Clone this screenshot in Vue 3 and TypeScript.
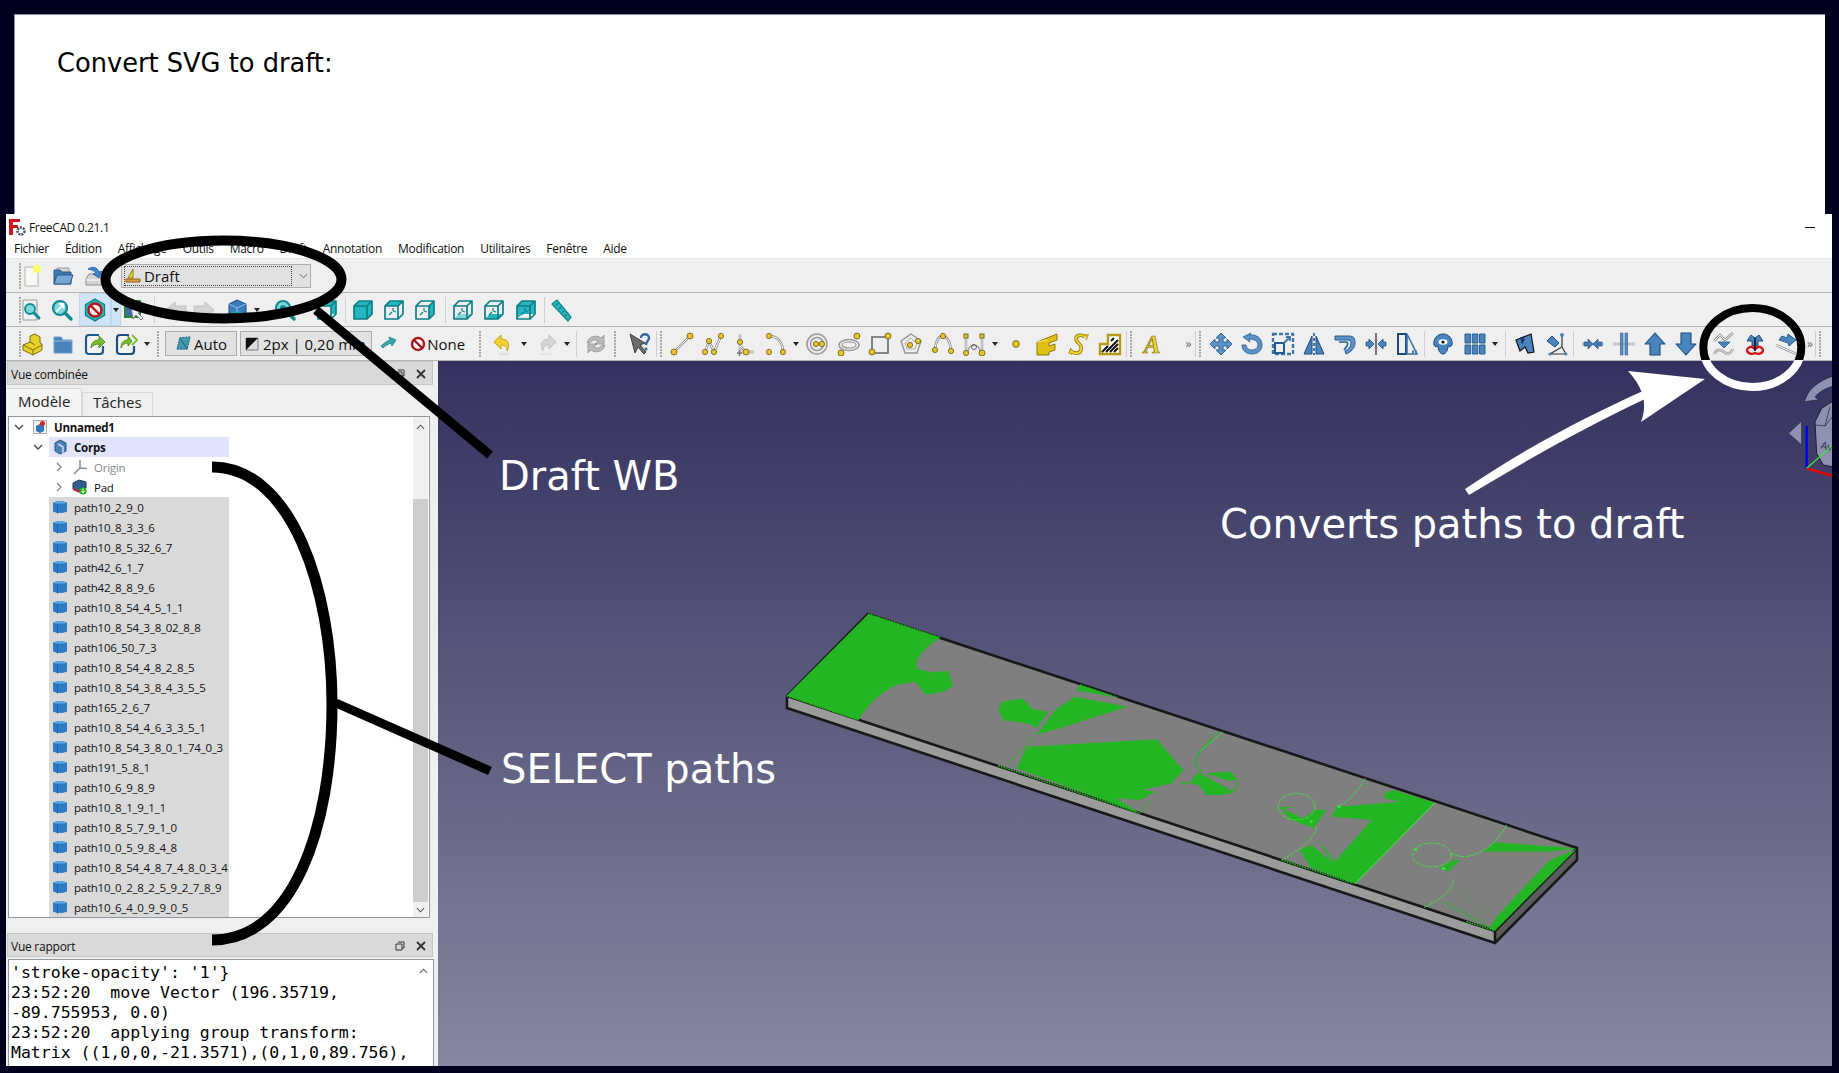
<script setup lang="ts">
type Item = { kind: string; name?: string; w?: number; on?: boolean }

// small svg helpers for the toolbar icons (24x24 box)
const dot = (x: number, y: number, r = 2.6) =>
  `<circle cx="${x}" cy="${y}" r="${r}" fill="#e8c81e" stroke="#6f6226" stroke-width=".9"/>`
const wire = (d: string) =>
  `<path d="${d}" fill="none" stroke="#8b8b8b" stroke-width="2.4"/><path d="${d}" fill="none" stroke="#fff" stroke-width="1"/>`
const blue = (d: string, extra = '') =>
  `<path d="${d}" fill="#4a84bf" stroke="#1e4a78" stroke-width="1.1" stroke-linejoin="round" ${extra}/>`
const cube = (faces: string) =>
  `${faces}<path d="M3 8L8 3H21V16L16 21H3ZM3 8H16V21M16 8L21 3" fill="none" stroke="#0d7f85" stroke-width="1.7" stroke-linejoin="round"/>`
const teal = '#25b6bf'
const mini = `<path d="M7 17l3-3M11 13v-3M11 13l3 1" stroke="#0d7f85" stroke-width="1.2" fill="none"/>`
const lens = `<circle cx="10" cy="10" r="7" fill="#7fd8dc" stroke="#0f8a90" stroke-width="2.2"/><path d="M15 15l6 6" stroke="#0f8a90" stroke-width="3.4" stroke-linecap="round"/>`

const icons: Record<string, string> = {
  new: `<path d="M5 3h13v19H5z" fill="#f8f8f4" stroke="#b4b4b4"/><circle cx="17" cy="5" r="4" fill="#fbfb6a"/>`,
  open: `<path d="M6 4h12v8H6z" fill="#d8d8d8" stroke="#999"/><path d="M3 20V6h6l2 2h9v12z" fill="#3f78b4" stroke="#2a5686"/><path d="M3 20l3-9h16l-3 9z" fill="#76a6d8" stroke="#2a5686"/>`,
  save: `<path d="M3 15l3-5h12l3 5v6H3z" fill="#d4d4d4" stroke="#8a8a8a"/><path d="M3 16h18" stroke="#fff"/><path d="M5 5c5-3 9-2 11 3l3-1-3 7-6-4 3-1c-2-3-5-3-8-4z" fill="#3f86cf" stroke="#245b92" stroke-width=".8"/>`,
  docsearch: `<path d="M4 2h14v20H4z" fill="#f2f2f2" stroke="#9a9a9a"/><circle cx="11" cy="11" r="5" fill="#7fd8dc" stroke="#0f8a90" stroke-width="1.8"/><path d="M15 15l5 5" stroke="#0f8a90" stroke-width="3" stroke-linecap="round"/>`,
  zoom: `${lens}<path d="M6 14l7-7M9 6h4.5v4.5" stroke="#fff" stroke-width="1.8" fill="none"/>`,
  nope: `<path d="M12 1l9.5 5.5v11L12 23l-9.5-5.5v-11z" fill="${teal}" stroke="#0f7f86" stroke-width="1.3"/><circle cx="12" cy="12" r="6.5" fill="#eee" stroke="#b8161c" stroke-width="2.4"/><path d="M7.5 7.5l9 9" stroke="#b8161c" stroke-width="2.4"/>`,
  select: `<path d="M3 3h15v16H3z" fill="#3b6ea8" stroke="#1e8a2c" stroke-width="2"/><path d="M9 9l2 12 3-4 5 5 2-2-5-5 4-2z" fill="#eee" stroke="#666" stroke-width=".8"/>`,
  left: `<path d="M2 12l9-8v4h11v9H11v4z" fill="#d2d2d2" stroke="#c2c2c2"/>`,
  right: `<path d="M22 12l-9-8v4H2v9h11v4z" fill="#d2d2d2" stroke="#c2c2c2"/>`,
  bluebox: `<path d="M4 6l8-4 9 4v13l-9 4-8-4z" fill="#3a7cbc" stroke="#1d4c7c"/><path d="M4 6l8 4 9-4M12 10v13" fill="none" stroke="#8fc1ec"/><path d="M7 14l5 2 2-2 4 2" stroke="#18a8ad" stroke-width="2" fill="none"/>`,
  search: `${lens}<circle cx="10" cy="10" r="3" fill="#0f8a90"/>`,
  vfit: cube(`<path d="M8 3H21V16H16V8H3z" fill="${teal}"/>`),
  vfront: cube(`<path d="M3 8H16V21H3zM3 8L8 3H21V16L16 21V8z" fill="${teal}"/>`),
  vtop: cube(`<path d="M3 8L8 3H21L16 8z" fill="${teal}"/>${mini}`),
  vright: cube(`<path d="M16 8L21 3V16L16 21z" fill="${teal}"/>${mini}`),
  vrear: cube(`<path d="M3 21L8 16H21L16 21z" fill="${teal}" opacity=".5"/>${mini}`),
  vbottom: cube(`<path d="M3 21L8 16H21L16 21z" fill="${teal}"/>${mini}`),
  vleft: cube(`<path d="M3 8L8 3V16L3 21z" fill="${teal}"/><path d="M8 3H21V16H8z" fill="${teal}"/>${mini}`),
  ruler: `<path d="M3 6l5-4 14 17-3 4z" fill="${teal}" stroke="#0f7f86" stroke-width="1.2"/><path d="M7 7l2-1.5M10 11l2-1.5M13 14.5l2-1.5M16 18l2-1.5" stroke="#0b5f64"/>`,
  part: `<path d="M3 13l7-3v-6l5-2 5 3v6l2 1v6l-9 5-10-5z" fill="#e8d02a" stroke="#7b6c12"/><path d="M3 13l10 5 9-5M13 18v5M10 10l5 3" stroke="#7b6c12" fill="none"/>`,
  folder: `<path d="M3 21V5h7l2 3h9v13z" fill="#4a84bf" stroke="#6f9cc8"/><path d="M3 9h18" stroke="#8db5dc"/>`,
  link1: `<path d="M16 3H6a3 3 0 0 0-3 3v13a3 3 0 0 0 3 3h11a3 3 0 0 0 3-3v-5" fill="#f4f4f4" stroke="#1f5a8c" stroke-width="2.2"/><path d="M8 16c0-5 3-8 8-8V4l6 6-6 6v-4c-3 0-6 1-8 4z" fill="#78c12d" stroke="#3f7a12" stroke-width=".8"/>`,
  link2: `<path d="M15 3H6a3 3 0 0 0-3 3v13a3 3 0 0 0 3 3h11a3 3 0 0 0 3-3v-5" fill="#f4f4f4" stroke="#1f4f80" stroke-width="2.2"/><path d="M7 16c0-5 2-8 7-8V4l4 5-4 5v-3c-3 0-5 1-7 5z" fill="#78c12d" stroke="#3f7a12" stroke-width=".8"/><path d="M18 3l5 5-5 5" fill="none" stroke="#78c12d" stroke-width="1.8"/>`,
  snap: `<path d="M5 14c3-3 6-5 9-6l-1-3 7 3-4 6-1-3c-3 1-6 3-8 5z" fill="#3aa5ad" stroke="#1e7d85" stroke-width=".8"/>`,
  undo: `<path d="M10 3L3 10l7 7v-4c4 0 6 2 6 6 3-6 2-12-6-12z" fill="#f5d22a" stroke="#b8940f" stroke-width=".8"/><ellipse cx="13" cy="22" rx="6" ry="1.3" fill="#ddd"/>`,
  redo: `<path d="M14 3l7 7-7 7v-4c-4 0-6 2-6 6-3-6-2-12 6-12z" fill="#d5d5d5" stroke="#bbb" stroke-width=".8"/><ellipse cx="11" cy="22" rx="6" ry="1.3" fill="#e2e2e2"/>`,
  refresh: `<path d="M3 11c1-6 9-9 14-5l3-3v9h-9l3-3c-3-2-6-1-8 2zM21 13c-1 6-9 9-14 5l-3 3v-9h9l-3 3c3 2 6 1 8-2z" fill="#b8b8b8" stroke="#a0a0a0"/>`,
  help: `<path d="M2 2l5 19 3-6 6 7 2-2-6-7 5-2z" fill="#6b6b6b" stroke="#3e3e3e"/><path d="M13 6c0-5 8-5 8 0 0 3-3 3-3 7" fill="none" stroke="#34659b" stroke-width="2.4"/><circle cx="18" cy="17" r="1.5" fill="#34659b"/>`,
  line: `${wire('M4 20L20 4')}${dot(4, 20, 3)}${dot(20, 4, 3)}`,
  wire: `${wire('M4 20L8 9l5 11L20 4')}${dot(4, 20)}${dot(8, 9)}${dot(13, 20)}${dot(20, 4)}`,
  angle: `${wire('M8 2v20M8 14l6 6h8')}${dot(8, 10)}${dot(14, 20, 3)}<path d="M5 21h5M7.5 18v6" stroke="#777" stroke-width="1.5"/>`,
  arc: `${wire('M5 4c9 0 14 7 14 16')}${dot(5, 4)}${dot(19, 20)}${dot(5, 20)}`,
  circle: `<circle cx="12" cy="12" r="10" fill="none" stroke="#999" stroke-width="1.5"/><circle cx="12" cy="12" r="6.5" fill="none" stroke="#999" stroke-width="1.5"/>${dot(11, 12)}${dot(17, 12)}`,
  ellipse: `<ellipse cx="12" cy="13" rx="10" ry="5.5" fill="none" stroke="#999" stroke-width="1.5"/><ellipse cx="12" cy="13" rx="7" ry="3" fill="none" stroke="#999" stroke-width="1.2"/>${dot(20, 4, 3)}${dot(4, 21, 3)}`,
  rect: `<path d="M4 5h16v16H4z" fill="#eee" stroke="#666" stroke-width="1.6"/>${dot(4, 20, 3)}${dot(20, 4, 3)}`,
  polygon: `<path d="M12 2l10 7-4 12H6L2 9z" fill="none" stroke="#999" stroke-width="1.5"/><path d="M12 6l6 5-2 6H8l-2-6z" fill="none" stroke="#aaa"/>${dot(11, 13)}${dot(19, 9)}`,
  bspline: `${wire('M4 18C5 6 9 4 12 4s7 4 8 14')}${dot(4, 18)}${dot(12, 4)}${dot(20, 19)}`,
  bezier: `${wire('M4 5V20M20 5V20')}<path d="M6 20c0-9 12-9 12 0" fill="none" stroke="#999" stroke-width="1.5"/><circle cx="12" cy="15" r="2.5" fill="none" stroke="#666"/><rect x="2" y="2" width="4" height="4" fill="#e8c81e" stroke="#6f6226"/><rect x="18" y="2" width="4" height="4" fill="#e8c81e" stroke="#6f6226"/>${dot(4, 21)}${dot(20, 21, 3)}`,
  point: dot(12, 12, 3.4),
  facebinder: `<path d="M2 10l20-8v6l-8 3v3l6-2v6l-6 2v3L2 23z" fill="#e0c014" stroke="#8c780c"/><path d="M2 10l10-2" stroke="#f6e88a"/>`,
  shape: `<path d="M19 5c-3-3-9-2-9 2 0 4 7 5 5 11-1 4-7 4-10 1l-1 3" fill="none" stroke="#8c780c" stroke-width="3.6"/><path d="M19 5c-3-3-9-2-9 2 0 4 7 5 5 11-1 4-7 4-10 1l-1 3" fill="none" stroke="#f0d628" stroke-width="2"/><path d="M17 3h5l-2 5" fill="none" stroke="#c0a418" stroke-width="1.5"/>`,
  hatch: `<path d="M2 12h8V3h12v19H2z" fill="#fff" stroke="#b39c12" stroke-width="2.4"/><path d="M4 20l6-6M8 20l12-12M12 20l8-8M16 20l4-4M13 9l3-3" stroke="#111" stroke-width="2"/>`,
  textA: `<text x="12" y="21" font-size="25" font-style="italic" font-weight="700" font-family="Liberation Serif" text-anchor="middle" fill="#f0d628" stroke="#7b6c12" stroke-width=".7">A</text>`,
  move: `<path d="M12 1l5 5h-3v4h4V7l5 5-5 5v-3h-4v4h3l-5 5-5-5h3v-4H6v3l-5-5 5-5v3h4V6H7z" fill="#5b93cb" stroke="#275a8c" stroke-width=".9"/>`,
  rotate: `<path d="M9 4c7-1 13 3 13 10 0 6-5 9-10 9S2 20 2 14h4c0 3 3 5 6 5s6-2 6-5c0-4-4-6-9-6l1 3-7-5 8-4z" fill="#5b93cb" stroke="#275a8c" stroke-width=".8" transform="translate(0 -1)"/>`,
  scale: `<path d="M2 2h20v20H2z" fill="none" stroke="#3f74aa" stroke-width="2.4" stroke-dasharray="4 2"/><path d="M4 11h9v10H4z" fill="#eee" stroke="#245b92" stroke-width="2"/><path d="M13 11l6-6M15 5h4v4" stroke="#3f74aa" stroke-width="1.8" fill="none"/>`,
  mirror: `<path d="M10 4v18H2z" fill="#4a84bf" stroke="#1e4a78"/><path d="M14 4v18h8z" fill="#4a84bf" stroke="#1e4a78"/><path d="M12 1v22" stroke="#3f74aa" stroke-width="2" stroke-dasharray="3 2"/>`,
  offset: `<path d="M2 4h14c5 0 6 3 6 7 0 5-4 9-9 11l-1-3c4-2 6-5 6-8 0-2-1-3-4-3H2z" fill="#5b93cb" stroke="#275a8c"/><path d="M6 10h7c2 0 2 2 1 4l-3 4" fill="none" stroke="#275a8c" stroke-width="1.6"/>`,
  stretch: `<path d="M12 1v22" stroke="#222" stroke-width="1.2"/><path d="M10 12L5 7v3H2v4h3v3zM14 12l5-5v3h3v4h-3v3z" fill="#4a84bf" stroke="#1e4a78" stroke-width=".8"/>`,
  trim: `<path d="M3 2h8v20H3z" fill="#eee" stroke="#1e4a78" stroke-width="2"/><path d="M12 2l10 20H12z" fill="#eee" stroke="#3f74aa" stroke-width="1.6"/><path d="M17 20h5" stroke="#3f74aa" stroke-width="3" stroke-dasharray="2 1"/>`,
  clone: `<path d="M3 13c-1-6 3-11 9-11s10 5 9 11c-1 2-3 2-4 1 0 4-2 8-5 8s-5-4-5-8c-1 1-3 1-4-1z" fill="#4a84bf" stroke="#1e4a78"/><ellipse cx="12" cy="10" rx="4.5" ry="2.8" fill="#fff"/><circle cx="12" cy="10" r="1.6" fill="#111"/>`,
  array: `<path d="M2 2h5.500v9H2zM9.300 2h5.500v9H9.300zM16.500 2H22v9h-5.500zM2 13h5.500v9H2zM9.300 13h5.500v9H9.300zM16.500 13H22v9h-5.500z" fill="#4a84bf" stroke="#2d5f92"/>`,
  sketch: `<path d="M3 8L18 2l3 18-6 1-3-6-5 4z" fill="#4a84bf" stroke="#111" stroke-width="1.2"/><path d="M7 5l5 2-3 6z" fill="#1a3f66"/>`,
  sketch2: `<path d="M3 9l5-5 7 7-4 4z" fill="#4a84bf" stroke="#1e4a78"/><path d="M18 2v13L6 22h16M18 15l4 7" fill="none" stroke="#333" stroke-width="1.2"/><circle cx="18" cy="3" r="2" fill="#4a84bf"/><circle cx="6" cy="22" r="1.5" fill="#4a84bf"/><circle cx="22" cy="22" r="1.5" fill="#4a84bf"/>`,
  join: `${wire('M1 12H23')}<path d="M12 12L7 7v3H3v4h4v3zM12 12l5-5v3h4v4h-4v3z" fill="#3f78b4" stroke="#1e4a78" stroke-width=".6"/>`,
  split: `${wire('M1 12H23')}<path d="M8.500 1h2.500v22H8.500zM13 1h2.500v22H13z" fill="#5b93cb" stroke="#275a8c" stroke-width=".7"/>`,
  up: blue('M12 1l10 11h-5v11H7V12H2z'),
  down: blue('M12 23L2 12h5V1h10v11h5z'),
  wires: `${wire('M2 9l6-6 5 5 8-7')}${wire('M2 22c3-5 6-5 10-2s6 2 9-3')}<path d="M6 10h12l-6 6z" fill="#4a84bf" stroke="#1e4a78" stroke-width=".7"/>`,
  downgrade: `<path d="M9 9H4l4-6 4 3 4-3 4 6h-5v5H9z" fill="#4a84bf" stroke="#1e4a78"/><path d="M4 18a4 4 0 0 1 5-3l3 2 3-2a4 4 0 0 1 5 3c0 3-4 5-8 3-4 2-8 0-8-3z" fill="none" stroke="#d11519" stroke-width="2.4"/><path d="M12 6v13" stroke="#111" stroke-width="1.6"/>`,
  to2d: `${wire('M2 13l20 9')}<path d="M14 2l8 6-7 6-1-3-9-3 3-4 5 2z" fill="#4a84bf" stroke="#1e4a78" stroke-width=".8"/>`,
}

// row descriptions: "+n" is a gap, "|" a separator, ":" a grip, "v" a drop arrow, "»" the overflow mark
const parse = (src: string): Item[] =>
  src.split(' ').map((tok) => {
    if (tok[0] === '+') return { kind: 'gap', w: parseFloat(tok.slice(1)) }
    if (tok === '|') return { kind: 'sep' }
    if (tok === ':') return { kind: 'grip' }
    if (tok === '»') return { kind: 'more' }
    if (tok === 'v' || tok === 'v!') return { kind: 'drop', on: tok === 'v!' }
    if (tok[0] === '@') return { kind: tok.slice(1) }
    const on = tok.endsWith('!')
    return { kind: 'ic', name: on ? tok.slice(0, -1) : tok, on }
  })

const rows: Item[][] = [
  '+16 : +-7.6 new open save +10.7 @combo',
  '+16 : +-8.5 docsearch zoom +1.3 nope! v! +-2 select +4 | +5 left +-3 right +1.5 bluebox v +7 search +11 vfit +2.5 | +.5 vfront vtop vright +4 | +1.6 vrear vbottom vleft +2.5 | +.5 ruler',
  '+16 : +-7.6 part folder link1 link2 v +2 : +3.4 @auto +3 @stroke snap @none +3 : +3 undo v +2.5 redo v +4 | +2.6 refresh : +5 help | : +1.7 line wire angle arc v +.3 circle ellipse rect polygon bspline bezier v +.5 point facebinder shape hatch +1 | : +1 textA +16 » +1.5 | : +1.4 move rotate +-1 scale mirror +-.5 offset stretch +-.5 trim +1.5 | +2.8 clone array v +4.5 | +3 sketch sketch2 +1.5 | +3 join split up down +4 | +1 wires downgrade to2d +3 » | :',
].map(parse)

const menu = ['Fichier', 'Édition', 'Affichage', 'Outils', 'Macro', 'Draft', 'Annotation', 'Modification', 'Utilitaires', 'Fenêtre', 'Aide']

const paths = [
  'path10_2_9_0', 'path10_8_3_3_6', 'path10_8_5_32_6_7', 'path42_6_1_7', 'path42_8_8_9_6',
  'path10_8_54_4_5_1_1', 'path10_8_54_3_8_02_8_8', 'path106_50_7_3', 'path10_8_54_4_8_2_8_5',
  'path10_8_54_3_8_4_3_5_5', 'path165_2_6_7', 'path10_8_54_4_6_3_3_5_1', 'path10_8_54_3_8_0_1_74_0_3',
  'path191_5_8_1', 'path10_6_9_8_9', 'path10_8_1_9_1_1', 'path10_8_5_7_9_1_0', 'path10_0_5_9_8_4_8',
  'path10_8_54_4_8_7_4_8_0_3_4', 'path10_0_2_8_2_5_9_2_7_8_9', 'path10_6_4_0_9_9_0_5',
]

const report = [
  "'stroke-opacity': '1'}",
  '23:52:20  move Vector (196.35719,',
  '-89.755953, 0.0)',
  '23:52:20  applying group transform:',
  'Matrix ((1,0,0,-21.3571),(0,1,0,89.756),',
  '(0,0,1,0),(0,0,0,1))',
]
</script>

<template>
  <div class="page">
    <section class="slide">
      <h1>Convert SVG to draft:</h1>
    </section>

    <div class="window">
      <header class="titlebar">
        <svg class="logo" viewBox="0 0 18 18">
          <path d="M1 1h11v3H5v3h5v3H5v7H1z" fill="#d2161c" />
          <circle cx="13" cy="13" r="3.5" fill="none" stroke="#3c4a66" stroke-width="2.4" stroke-dasharray="2 1" />
        </svg>
        <span>FreeCAD 0.21.1</span>
        <i class="minimize"></i>
      </header>
      <nav class="menubar">
        <span v-for="m in menu" :key="m">{{ m }}</span>
      </nav>

      <div v-for="(row, r) in rows" :key="r" class="toolbar">
        <template v-for="(it, i) in row" :key="i">
          <span v-if="it.kind === 'gap'" class="gap" :style="{ marginLeft: it.w + 'px' }"></span>
          <span v-else-if="it.kind === 'sep'" class="sep"></span>
          <span v-else-if="it.kind === 'grip'" class="grip"></span>
          <span v-else-if="it.kind === 'more'" class="more">»</span>
          <span v-else-if="it.kind === 'drop'" class="drop" :class="{ on: it.on }"><b></b></span>
          <span v-else-if="it.kind === 'ic'" class="tool" :class="{ on: it.on }">
            <svg viewBox="0 0 24 24" v-html="icons[it.name!]"></svg>
          </span>
          <div v-else-if="it.kind === 'combo'" class="combo">
            <span class="combo-inner">
              <svg viewBox="0 0 16 16">
                <path d="M8 1v9H3z" fill="#f2d42c" stroke="#8d7a14" />
                <path d="M1 11h14v3H1z" fill="#e0a23a" stroke="#8a5f17" />
              </svg>
              Draft
            </span>
            <svg class="chev" viewBox="0 0 10 6"><path d="M1 1l4 4 4-4" fill="none" stroke="#555" /></svg>
          </div>
          <div v-else-if="it.kind === 'auto'" class="tbtn auto">
            <svg viewBox="0 0 18 18">
              <path d="M5 3l11-1-3 13H2z" fill="#3f9aa6" stroke="#1f5a8c" stroke-dasharray="2 1" />
              <path d="M5 3l8 12" stroke="#1f5a8c" />
            </svg>
            Auto
          </div>
          <div v-else-if="it.kind === 'stroke'" class="tbtn stroke">
            <svg viewBox="0 0 14 14">
              <path d="M1 1h12v12H1z" fill="#ddd" stroke="#777" />
              <path d="M1 1h12L1 13z" fill="#111" />
            </svg>
            2px | 0,20 mm
          </div>
          <div v-else-if="it.kind === 'none'" class="none-btn">
            <svg viewBox="0 0 16 16">
              <circle cx="8" cy="8" r="6" fill="#fff" stroke="#a3161a" stroke-width="2.4" />
              <path d="M4 4l8 8" stroke="#a3161a" stroke-width="2.4" />
            </svg>
            None
          </div>
        </template>
      </div>

      <div class="workspace">
        <aside class="side">
          <div class="dock-title">
            <span>Vue combinée</span>
            <svg class="float" viewBox="0 0 10 10"><path d="M3 1h6v6H7M1 3h6v6H1z" fill="none" stroke="#333" /></svg>
            <svg class="close" viewBox="0 0 10 10"><path d="M1 1l8 8M9 1l-8 8" stroke="#333" stroke-width="1.8" /></svg>
          </div>
          <div class="tabs">
            <span class="tab active">Modèle</span>
            <span class="tab">Tâches</span>
          </div>
          <div class="tree">
            <div class="tree-list">
              <div class="node root">
                <svg class="tw" viewBox="0 0 10 10"><path d="M1 3l4 4 4-4" fill="none" stroke="#444" stroke-width="1.3" /></svg>
                <svg class="doc" viewBox="0 0 14 14">
                  <path d="M.5.5h13v13H.5z" fill="#f1f1f1" stroke="#aaa" />
                  <path d="M3 6l4-2 4 2v5l-4 2-4-2z" fill="#2f78bd" />
                  <circle cx="9.5" cy="3.5" r="2.5" fill="#d3222a" />
                </svg>
                <b>Unnamed1</b>
              </div>
              <div class="node body">
                <svg class="tw" viewBox="0 0 10 10"><path d="M1 3l4 4 4-4" fill="none" stroke="#444" stroke-width="1.3" /></svg>
                <div class="cell body-cell">
                  <svg viewBox="0 0 16 16">
                    <path d="M3 4l5-3 6 3v8l-6 3-5-3z" fill="#4d82b4" stroke="#2b557e" />
                    <path d="M6 5l5 3v6" fill="none" stroke="#c9ddee" stroke-width="1.5" />
                  </svg>
                  <b>Corps</b>
                </div>
              </div>
              <div class="node child muted">
                <svg class="tw" viewBox="0 0 10 10"><path d="M3 1l4 4-4 4" fill="none" stroke="#888" stroke-width="1.3" /></svg>
                <svg viewBox="0 0 16 16">
                  <path d="M8 1v9M8 9l7 .5M8 9l-6 6" fill="none" stroke="#8c8c8c" stroke-width="1.5" />
                </svg>
                <span>Origin</span>
              </div>
              <div class="node child">
                <svg class="tw" viewBox="0 0 10 10"><path d="M3 1l4 4-4 4" fill="none" stroke="#888" stroke-width="1.3" /></svg>
                <svg viewBox="0 0 16 16">
                  <path d="M1 4l6-3 7 2v6l-7 3-6-2z" fill="#2f5f8f" stroke="#1b3a5a" />
                  <path d="M1 10l7 3" stroke="#c92228" stroke-width="2" />
                  <circle cx="11" cy="12" r="3.6" fill="#18b818" />
                  <path d="M11 9.5v4.5M9.5 12l1.5 2 1.5-2" fill="none" stroke="#fff" />
                </svg>
                <span>Pad</span>
              </div>
              <div v-for="p in paths" :key="p" class="node leaf">
                <div class="cell sel">
                  <svg viewBox="0 0 16 16">
                    <path d="M1 3.5Q8 .5 15 3.5v9Q8 15.5 1 12.5z" fill="#2b7cc4" />
                    <path d="M1 3.5Q8 .5 15 3.5 8 6 1 3.5z" fill="#62a6de" />
                    <path d="M5.5 4.8v10" stroke="#1c5f9c" stroke-width=".8" />
                  </svg>
                  <span>{{ p }}</span>
                </div>
              </div>
            </div>
            <div class="scrollbar">
              <svg class="up" viewBox="0 0 10 6"><path d="M1 5l4-4 4 4" fill="none" stroke="#555" stroke-width="1.2" /></svg>
              <div class="track"><div class="thumb"></div></div>
              <svg class="dn" viewBox="0 0 10 6"><path d="M1 1l4 4 4-4" fill="none" stroke="#555" stroke-width="1.2" /></svg>
            </div>
          </div>
          <div class="dock-title second">
            <span>Vue rapport</span>
            <svg class="float" viewBox="0 0 10 10"><path d="M3 1h6v6H7M1 3h6v6H1z" fill="none" stroke="#333" /></svg>
            <svg class="close" viewBox="0 0 10 10"><path d="M1 1l8 8M9 1l-8 8" stroke="#333" stroke-width="1.8" /></svg>
          </div>
          <div class="report">
            <pre>{{ report.join('\n') }}</pre>
            <svg class="report-up" viewBox="0 0 10 6"><path d="M1 5l4-4 4 4" fill="none" stroke="#555" stroke-width="1.2" /></svg>
          </div>
        </aside>

        <main class="viewport">
          <svg class="scene" viewBox="438 361 1394 705">
            <!-- plate -->
            <path d="M787 696V708L1495 943V931z" fill="#9b9b9b" />
            <path d="M1495 931V943L1577 860V848z" fill="#5c5c5c" />
            <path d="M868 614L787 696 1495 931 1577 848z" fill="#7f7f7f" />
            <path d="M868 614L1577 848V860L1495 943 787 708V696zM787 696L1495 931V943M1495 931L1577 848" fill="none" stroke="#181818" stroke-width="2.6" />

            <g transform="translate(770 600) scale(.3333)" fill="#24b524">
              <path d="M50 287L295 42 510 113C470 140 440 170 440 190V205L480 217 535 213 550 258 520 275 468 284 435 245 410 250C370 250 310 290 265 360z" />
              <path d="M685 330L695 305 755 295 790 328 835 335 800 385 780 372 700 360z" />
              <path d="M800 405L855 330 915 290 1072 320 900 375z" />
              <path d="M930 255L1040 292 920 272z" />
              <path d="M740 505L770 440 1160 418 1240 510 1205 550 1120 570 1155 575 1110 600 1040 595 1110 640z" />
              <path d="M1280 470C1300 440 1320 420 1350 395M795 410L715 490M1140 600L1110 640" fill="none" stroke="#24b524" stroke-width="3" />
              <path d="M50 287L265 360M295 42L510 113M685 497L1110 640M930 255L1040 292" fill="none" stroke="#24b524" stroke-width="5" stroke-dasharray="5 3" />
            </g>
            <g transform="translate(1180 740) scale(.3333)" fill="#24b524">
              <path d="M28 128L55 97 75 108 160 155 130 165 80 165 55 135z" />
              <path d="M75 100L150 95 170 120 145 122z" />
              <path d="M150 95L175 125 165 150 150 160M95 0L55 40 45 70 65 95M0 130H28" fill="none" stroke="#24b524" stroke-width="4" />
              <path d="M0 78L10 90 0 100z" />
            </g>
            <g transform="translate(1200 720) scale(.3333)" fill="#24b524">
              <path d="M410 260L600 245 550 235 555 220 580 210 705 248 465 492 400 430 515 300 395 290z" />
              <path d="M300 390L335 375 400 430 345 350 415 435 460 490 380 460 330 440z" />
              <path d="M240 262L285 260 250 268 310 295 345 270 380 270 340 325 270 298z" />
              <path d="M850 395L885 367 1130 385 1050 395z" />
              <path d="M1130 387L1050 420 890 590 868 625 885 632z" />
              <path d="M755 490L885 630 800 540z" />
              <path d="M780 420L745 455 720 445 760 420z" />
              <path d="M730 545L885 630" fill="none" stroke="#24b524" stroke-width="3" />
              <path d="M705 248L465 492" fill="none" stroke="#55e055" stroke-width="3" />
              <ellipse cx="290" cy="260" rx="55" ry="40" fill="none" stroke="#3fdc3f" stroke-width="3" stroke-dasharray="14 4" />
              <ellipse cx="695" cy="405" rx="58" ry="36" fill="none" stroke="#3fdc3f" stroke-width="3" stroke-dasharray="14 4" />
              <path d="M495 175C470 220 440 250 410 260M920 315C890 370 850 400 800 410 775 412 755 400 750 400M245 420C280 400 340 370 350 320M672 562C720 540 760 510 760 480M68 35L0 95" fill="none" stroke="#3fdc3f" stroke-width="3" stroke-dasharray="12 3" />
              <path d="M245 420L460 490M800 605L885 632" fill="none" stroke="#24b524" stroke-width="5" stroke-dasharray="5 3" />
              <path d="M642 389h10M726 446h10M330 304h8M414 260h8" stroke="#3fdc3f" stroke-width="8" />
            </g>

            <!-- navigation cube, cut by the window edge -->
            <g transform="translate(1720 350) scale(.3333)">
              <path d="M340 78C300 90 270 115 262 135L252 155 295 150 285 140C300 125 320 112 345 108z" fill="#8f91b2" stroke="#1d1d2c" stroke-width="2" />
              <path d="M205 250L245 213V285z" fill="#8f91b2" stroke="#1d1d2c" stroke-width="2" />
              <path d="M345 150L305 175 285 215 290 310 310 345 345 352z" fill="#8f91b2" stroke="#1d1d2c" stroke-width="3" />
              <path d="M285 225L315 228 345 190M315 228L330 170" fill="none" stroke="#1d1d2c" stroke-width="2" />
              <text x="300" y="295" font-family="DejaVu Sans" font-size="30" fill="#33334a" transform="rotate(14 300 295)">Av</text>
              <path d="M260 228V355" stroke="#0000f0" stroke-width="7" />
              <path d="M260 355L345 380" stroke="#f00000" stroke-width="7" />
              <path d="M260 355L345 280" stroke="#40e040" stroke-width="4" />
            </g>
          </svg>
        </main>
      </div>
    </div>

    <!-- hand-drawn notes over the screenshot -->
    <svg class="notes" viewBox="0 0 1839 1073">
      <defs>
        <clipPath id="above"><path d="M1690 290h130v70h-130z" /></clipPath>
        <clipPath id="below"><path d="M1690 360h130v50h-130z" /></clipPath>
      </defs>
      <ellipse cx="223.500" cy="279.500" rx="118" ry="39" fill="none" stroke="#000" stroke-width="10" />
      <path d="M316 310L490 455" stroke="#000" stroke-width="9" />
      <path d="M212 467C292 467 332 590 332 704 332 830 292 940 212 940" fill="none" stroke="#000" stroke-width="11" />
      <path d="M336 703L490 771" stroke="#000" stroke-width="9" />
      <ellipse cx="1752.300" cy="347.500" rx="49" ry="39.500" fill="none" stroke="#000" stroke-width="8" clip-path="url(#above)" />
      <ellipse cx="1752.300" cy="347.500" rx="49" ry="39.500" fill="none" stroke="#fff" stroke-width="8" clip-path="url(#below)" />
      <path d="M1465 489C1530 445 1590 415 1643 391L1645 399C1590 425 1535 455 1469 495z" fill="#fff" />
      <path d="M1705 379L1628 371C1641 385 1649 402 1641 422z" fill="#fff" />
    </svg>
    <span class="note wb">Draft WB</span>
    <span class="note sel-note">SELECT paths</span>
    <span class="note conv">Converts paths to draft</span>
  </div>
</template>

<style>
html,
body {
  margin: 0;
  background: #00001f;
}
</style>

<style scoped>
.page {
  position: relative;
  width: 1839px;
  height: 1073px;
  padding-top: 14px;
  box-sizing: border-box;
  overflow: hidden;
  background: #00001f;
  font-family: 'Open Sans', 'Noto Sans', sans-serif;
  color: #111;
}

.slide {
  margin-left: 14px;
  width: 1811px;
  height: 200px;
  box-sizing: border-box;
  background: #fff;
  border-top: 1px solid #8a8aa5;
  border-left: 1px solid #8a8aa5;
  padding: 30px 0 0 42px;
}

.slide h1 {
  margin: 0;
  font: 400 25.7px/36px 'DejaVu Sans', sans-serif;
  color: #000;
}

.window {
  margin-left: 6px;
  width: 1826px;
  height: 852px;
  display: flex;
  flex-direction: column;
  background: #efefef;
  overflow: hidden;
}

.titlebar {
  height: 26px;
  flex: none;
  display: flex;
  align-items: center;
  background: #fff;
  font-size: 12px;
  letter-spacing: -0.35px;
  padding-left: 2px;
  box-sizing: border-box;
}

.logo {
  width: 18px;
  height: 18px;
  margin-right: 3px;
}

.minimize {
  margin-left: auto;
  margin-right: 17px;
  width: 10px;
  height: 1px;
  background: #000;
}

.menubar {
  height: 19px;
  flex: none;
  box-sizing: border-box;
  display: flex;
  gap: 16px;
  padding-left: 8px;
  background: #fff;
  border-bottom: 1px solid #e6e6e6;
  font-size: 12px;
  line-height: 17px;
  letter-spacing: -0.3px;
}

.toolbar {
  height: 34px;
  flex: none;
  box-sizing: border-box;
  display: flex;
  align-items: center;
  border-bottom: 1px solid #b4b4b4;
  margin-left: -6px;
  background: #efefef;
}

.gap {
  flex: none;
  width: 0;
}

.sep {
  flex: none;
  width: 1px;
  height: 26px;
  background: #cfcfcf;
}

.grip {
  flex: none;
  width: 8px;
  height: 26px;
  background: radial-gradient(circle at 1px 1px, #a8a8a8 1px, transparent 1.2px) 3px 0 / 3px 3px repeat-y;
}

.more {
  flex: none;
  width: 10px;
  font-size: 12px;
  color: #666;
  text-align: center;
}

.drop {
  flex: none;
  width: 10px;
  height: 33px;
  display: flex;
  align-items: center;
  justify-content: center;
}

.drop b {
  border: 3.5px solid transparent;
  border-top: 4px solid #222;
  border-bottom: 0;
}

.tool {
  flex: none;
  width: 31.3px;
  height: 33px;
  display: flex;
  align-items: center;
  justify-content: center;
}

.tool svg {
  width: 24px;
  height: 24px;
}

.tool.on,
.drop.on {
  background: #cfe4f5;
  box-shadow: inset 0 0 0 1px #bcd8ee;
}

.combo {
  flex: none;
  width: 190px;
  height: 24px;
  box-sizing: border-box;
  display: flex;
  align-items: center;
  background: #e1e1e1;
  border: 1px solid #adadad;
  font-size: 15px;
}

.combo-inner {
  width: 168px;
  height: 20px;
  margin-left: 2px;
  display: flex;
  align-items: center;
  gap: 3px;
  border: 1px dotted #444;
  box-sizing: border-box;
}

.combo-inner svg {
  width: 16px;
  height: 16px;
}

.chev {
  width: 9px;
  height: 6px;
  margin-left: 7px;
}

.tbtn {
  flex: none;
  height: 25px;
  box-sizing: border-box;
  display: flex;
  align-items: center;
  background: #e2e2e2;
  border: 1px solid #adadad;
  font-size: 15px;
  overflow: hidden;
  white-space: nowrap;
}

.auto {
  width: 72px;
  padding-left: 9px;
  gap: 2px;
}

.auto svg {
  width: 17px;
  height: 17px;
}

.stroke {
  width: 132px;
  padding-left: 4px;
  gap: 4px;
}

.stroke svg {
  width: 14px;
  height: 14px;
}

.none-btn {
  flex: none;
  width: 70px;
  height: 25px;
  padding-left: 7px;
  box-sizing: border-box;
  display: flex;
  align-items: center;
  gap: 1px;
  font-size: 15px;
}

.none-btn svg {
  width: 16px;
  height: 16px;
}

.workspace {
  flex: 1;
  min-height: 0;
  display: flex;
}

.side {
  flex: none;
  width: 432px;
  box-sizing: border-box;
  padding: 0 4px 0 1px;
  display: flex;
  flex-direction: column;
  background: #efefef;
}

.dock-title {
  flex: none;
  height: 24px;
  box-sizing: border-box;
  display: flex;
  align-items: center;
  padding: 2px 0 0 3px;
  background: #d9d9d9;
  border: 1px solid #c6c6c6;
  font-size: 12px;
  letter-spacing: -0.25px;
  margin-right: 1px;
}

.dock-title .float {
  margin-left: auto;
  width: 10px;
  height: 10px;
}

.dock-title .close {
  margin: 0 6px 0 11px;
  width: 10px;
  height: 10px;
}

.dock-title.second {
  margin-top: 15px;
}

.tabs {
  flex: none;
  height: 31px;
  display: flex;
  align-items: flex-end;
  font-size: 15px;
}

.tab {
  height: 24px;
  line-height: 18px;
  padding: 0 10px;
  box-sizing: border-box;
  border: 1px solid #d9d9d9;
  border-bottom: 0;
  color: #222;
}

.tab.active {
  width: 75px;
  height: 28px;
  padding: 0 0 0 11px;
  line-height: 24px;
  border-left: 0;
  background: #f4f4f4;
}

.tree {
  flex: none;
  margin-left: 1px;
  width: 422px;
  height: 502px;
  box-sizing: border-box;
  display: flex;
  background: #fff;
  border: 1px solid #8f98a0;
}

.tree-list {
  flex: 1;
  font-size: 11.5px;
  letter-spacing: -0.25px;
}

.node {
  height: 20px;
  display: flex;
  align-items: center;
  white-space: nowrap;
}

.node svg {
  flex: none;
  width: 16px;
  height: 16px;
}

.node .tw {
  width: 10px;
  height: 10px;
}

.root .tw {
  margin-left: 5px;
}

.root .doc {
  width: 14px;
  height: 14px;
  margin: 0 7px 0 9px;
}

.body .tw {
  margin: 0 6px 0 24px;
}

.child .tw {
  margin: 0 8px 0 45px;
}

.child span {
  margin-left: 6px;
}

.muted {
  color: #8a8a8a;
}

.leaf {
  padding-left: 40px;
}

.cell {
  width: 180px;
  height: 20px;
  padding-left: 3px;
  box-sizing: border-box;
  display: flex;
  align-items: center;
  gap: 6px;
}

.sel {
  background: #d9d9d9;
}

.body-cell {
  background: #e1e4fb;
}

.scrollbar {
  flex: none;
  width: 15px;
  margin-right: 1px;
  display: flex;
  flex-direction: column;
  align-items: center;
  background: #f0f0f0;
}

.scrollbar .up,
.scrollbar .dn {
  flex: none;
  width: 9px;
  height: 6px;
}

.scrollbar .up {
  margin: 7px 0;
}

.scrollbar .dn {
  margin: 5px 0 4px;
}

.track {
  flex: 1;
  width: 100%;
}

.thumb {
  margin-top: 62px;
  height: 403px;
  background: #cdcdcd;
}

.report {
  flex: 1;
  margin: 2px 0 0 1px;
  width: 426px;
  position: relative;
  min-height: 0;
  overflow: hidden;
  box-sizing: border-box;
  background: #fff;
  border: 1px solid #8f98a0;
  border-bottom: 0;
}

.report pre {
  margin: 3px 0 0 2px;
  font: 16.5px/20px 'DejaVu Sans Mono', monospace;
  color: #000;
}

.report-up {
  position: absolute;
  top: 8px;
  right: 5px;
  width: 9px;
  height: 6px;
}

.viewport {
  flex: 1;
  min-width: 0;
  background: linear-gradient(#33315f, #87879f 100%);
}

.scene {
  display: block;
  width: 100%;
  height: 100%;
}

.notes {
  position: absolute;
  left: 0;
  top: 0;
  width: 1839px;
  height: 1073px;
  pointer-events: none;
}

.note {
  position: absolute;
  color: #fff;
  font: 400 40px/1 'DejaVu Sans', sans-serif;
  white-space: nowrap;
}

.wb {
  left: 499px;
  top: 456px;
}

.sel-note {
  left: 501px;
  top: 749px;
}

.conv {
  left: 1220px;
  top: 504px;
}
</style>
